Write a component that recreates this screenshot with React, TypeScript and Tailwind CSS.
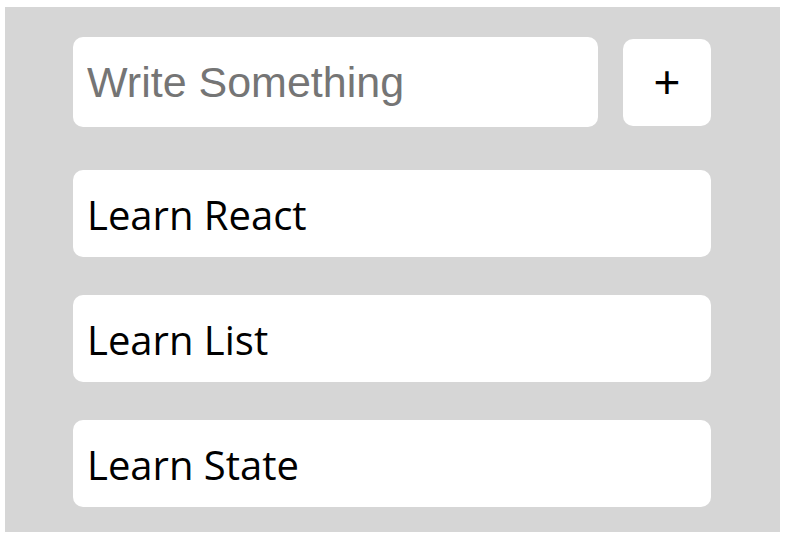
import { useState } from 'react';

const todos = ['Learn React', 'Learn List', 'Learn State'];

export default function App() {
  const [text, setText] = useState('');

  return (
    <div className="pl-[5px] pt-[7px] bg-white">
      <div className="w-[775px] h-[525px] bg-[#d6d6d6] pl-[68px] pr-[69px] pt-[30px]">
        <div className="flex items-center gap-[25px]">
          <input
            value={text}
            onChange={(e) => setText(e.target.value)}
            placeholder="Write Something"
            className="w-[525px] h-[90px] rounded-[10px] bg-white px-[14px] text-[43px] text-black placeholder:text-[#757575] outline-none font-['Liberation_Sans',Arial,sans-serif]"
          />
          <button className="w-[88px] h-[87px] rounded-[10px] bg-white text-[46px] text-black font-['Liberation_Sans',Arial,sans-serif] flex items-center justify-center">
            +
          </button>
        </div>
        <ul className="mt-[43px] flex flex-col gap-[38px]">
          {todos.map((t) => (
            <li
              key={t}
              className="h-[87px] rounded-[10px] bg-white px-[14px] pt-[3px] flex items-center text-[40px] text-black font-['Open_Sans',sans-serif]"
            >
              {t}
            </li>
          ))}
        </ul>
      </div>
    </div>
  );
}
